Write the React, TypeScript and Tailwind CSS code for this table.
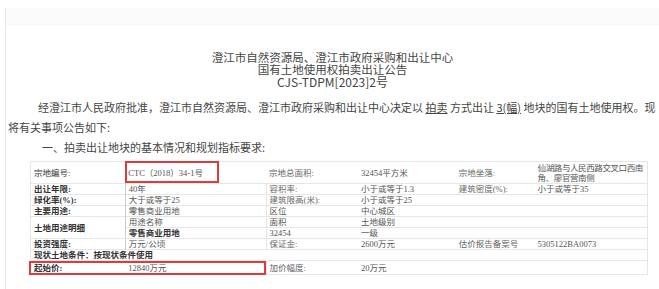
import React from 'react';

const serif = '"Liberation Serif", "Noto Sans CJK SC", serif';

export default function App() {
  return (
    <div className="w-[659px] h-[289px] overflow-hidden bg-white pt-2 text-[#333]" style={{ fontFamily: '"Noto Sans CJK SC", sans-serif' }}>
      <div className="ml-[5px] h-full border-l border-[#e8e8e8]">
        <div className="h-[18px] bg-[#fafafa]" />

        {/* title */}
        <div className="mt-[25px] text-center text-[11.5px] leading-[12px] text-[#444]">
          <div>澄江市自然资源局、澄江市政府采购和出让中心</div>
          <div>国有土地使用权拍卖出让公告</div>
          <div className="text-[12px] leading-[13px]">CJS-TDPM[2023]2号</div>
        </div>

        {/* notice */}
        <div className="mt-[9px] text-[11px] leading-[20px] text-[#444]">
          <div className="pl-[32px]">
            经澄江市人民政府批准，澄江市自然资源局、澄江市政府采购和出让中心决定以 <span className="underline">拍卖</span> 方式出让 <span className="underline">3(幅)</span> 地块的国有土地使用权。现
          </div>
          <div className="pl-[2px]">将有关事项公告如下:</div>
          <div className="pl-[36px]">一、拍卖出让地块的基本情况和规划指标要求:</div>
        </div>

        {/* table */}
        <div className="relative ml-[24px] mt-[4px] w-[618px]">
          <table className="w-full border-collapse text-[8.5px] leading-[10px] text-[#555]" style={{ fontFamily: serif }}>
            <colgroup>
              <col className="w-[95px]" />
              <col className="w-[141px]" />
              <col className="w-[92px]" />
              <col className="w-[98px]" />
              <col className="w-[77px]" />
              <col className="w-[115px]" />
            </colgroup>
            <tbody>
              <tr className="h-[22px] border border-[#e6e6e6]">
                <td className="px-[3px] text-[#333]">宗地编号:</td>
                <td className="px-[3px]">CTC（2018）34-1号</td>
                <td className="px-[3px] text-[#666]">宗地总面积:</td>
                <td className="px-[3px]">32454平方米</td>
                <td className="px-[3px] text-[#666]">宗地坐落:</td>
                <td className="pl-[5px] pr-0 tracking-[-0.4px]">仙湖路与人民西路交叉口西南角、廖官营南侧</td>
              </tr>
              <tr className="border border-[#e6e6e6]">
                <td className="px-[3px] font-bold text-[#333]">出让年限:</td>
                <td className="border-l border-[#ccc] px-[3px]">40年</td>
                <td className="border-l border-[#e6e6e6] px-[3px] text-[#666]">容积率:</td>
                <td className="px-[3px]">小于或等于1.3</td>
                <td className="px-[3px] text-[#666]">建筑密度(%):</td>
                <td className="pl-[5px]">小于或等于35</td>
              </tr>
              <tr className="border border-[#e6e6e6]">
                <td className="px-[3px] font-bold text-[#333]">绿化率(%):</td>
                <td className="border-l border-[#ccc] px-[3px]">大于或等于25</td>
                <td className="border-l border-[#e6e6e6] px-[3px] text-[#666]">建筑限高(米):</td>
                <td className="px-[3px]">小于或等于25</td>
                <td />
                <td />
              </tr>
              <tr className="border border-[#e6e6e6]">
                <td className="px-[3px] font-bold text-[#333]">主要用途:</td>
                <td className="border-l border-[#ccc] px-[3px]">零售商业用地</td>
                <td className="border-l border-[#e6e6e6] px-[3px]">区位</td>
                <td className="px-[3px]">中心城区</td>
                <td />
                <td />
              </tr>
              <tr className="border border-[#e6e6e6]">
                <td rowSpan={2} className="border-b border-[#e6e6e6] px-[3px] font-bold text-[#333]">土地用途明细</td>
                <td className="border-l border-[#ccc] px-[3px]">用途名称</td>
                <td className="border-l border-[#e6e6e6] px-[3px]">面积</td>
                <td className="px-[3px]">土地级别</td>
                <td />
                <td />
              </tr>
              <tr className="border border-[#e6e6e6]">
                <td className="border-l border-[#ccc] px-[3px] font-bold text-[#333]">零售商业用地</td>
                <td className="border-l border-[#e6e6e6] px-[3px]">32454</td>
                <td className="px-[3px]">一级</td>
                <td />
                <td />
              </tr>
              <tr className="border border-[#e6e6e6]">
                <td className="px-[3px] font-bold text-[#333]">投资强度:</td>
                <td className="border-l border-[#ccc] px-[3px]">万元/公顷</td>
                <td className="border-l border-[#e6e6e6] px-[3px] text-[#666]">保证金:</td>
                <td className="px-[3px]">2600万元</td>
                <td className="px-[3px] text-[#666]">估价报告备案号</td>
                <td className="pl-[5px]">5305122BA0073</td>
              </tr>
              <tr className="border border-[#e6e6e6]">
                <td colSpan={6} className="px-[3px] font-bold text-[#333]">现状土地条件：按现状条件使用</td>
              </tr>
              <tr className="h-[14px] border border-[#e6e6e6]">
                <td className="px-[3px] font-bold text-[#333]">起始价:</td>
                <td className="px-[3px]">12840万元</td>
                <td className="border-l border-[#e6e6e6] px-[3px] text-[#666]">加价幅度:</td>
                <td className="px-[3px]">20万元</td>
                <td />
                <td />
              </tr>
            </tbody>
          </table>

          {/* highlight boxes */}
          <div className="pointer-events-none absolute left-[95px] top-0 h-[22px] w-[94px] border-2 border-[#e0393e]" />
          <div className="pointer-events-none absolute bottom-0 left-[-1px] h-[14px] w-[237px] border-2 border-[#e0393e]" />
        </div>
      </div>
    </div>
  );
}
